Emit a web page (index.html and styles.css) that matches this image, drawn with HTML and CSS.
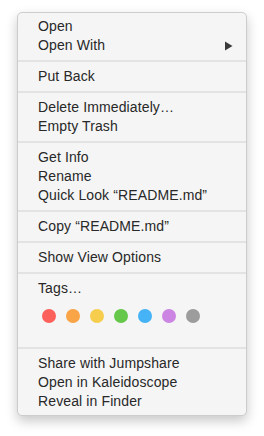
FILE: index.html
```html
<!DOCTYPE html>
<html>
<head>
<meta charset="utf-8">
<link rel="stylesheet" href="styles.css">
</head>
<body>
<div class="menu">
  <div class="item">Open</div>
  <div class="item has-sub">Open With
    <svg class="arrow" width="8" height="10" viewBox="0 0 8 10"><path d="M0 0.5 L7.5 5 L0 9.5 Z" fill="#3a3a3a"/></svg>
  </div>
  <div class="sep"></div>
  <div class="item">Put Back</div>
  <div class="sep"></div>
  <div class="item">Delete Immediately…</div>
  <div class="item">Empty Trash</div>
  <div class="sep"></div>
  <div class="item">Get Info</div>
  <div class="item">Rename</div>
  <div class="item">Quick Look “README.md”</div>
  <div class="sep"></div>
  <div class="item">Copy “README.md”</div>
  <div class="sep"></div>
  <div class="item">Show View Options</div>
  <div class="sep"></div>
  <div class="item">Tags…</div>
  <div class="tags">
    <span class="dot red"></span>
    <span class="dot orange"></span>
    <span class="dot yellow"></span>
    <span class="dot green"></span>
    <span class="dot blue"></span>
    <span class="dot purple"></span>
    <span class="dot gray"></span>
  </div>
  <div class="sep"></div>
  <div class="item">Share with Jumpshare</div>
  <div class="item">Open in Kaleidoscope</div>
  <div class="item">Reveal in Finder</div>
</div>
</body>
</html>
```
FILE: styles.css
```css
html, body {
  margin: 0;
  padding: 0;
  background: #ffffff;
}
body {
  width: 264px;
  height: 436px;
  overflow: hidden;
}
.menu {
  box-sizing: border-box;
  width: 230px;
  margin: 12px 0 0 17px;
  padding: 4px 0 4px 0;
  background: #f5f5f5;
  border: 1px solid #cdcdcd;
  border-radius: 5px;
  box-shadow: 0 5px 12px rgba(0, 0, 0, 0.22);
  font-family: "Liberation Sans", Arial, sans-serif;
  font-size: 14px;
  letter-spacing: 0.12px;
  color: #282828;
}
.item {
  display: flex;
  align-items: center;
  justify-content: space-between;
  height: 19px;
  line-height: 19px;
  padding: 0 13px 0 20px;
  white-space: nowrap;
}
.arrow {
  display: block;
  margin-top: 1px;
}
.sep {
  height: 12px;
  display: flex;
  align-items: center;
}
.sep::before {
  content: "";
  display: block;
  width: 100%;
  height: 2px;
  background: #e3e3e3;
}
.tags {
  display: flex;
  gap: 10px;
  padding: 11px 0 0 24px;
  height: 44px;
  box-sizing: border-box;
}
.dot {
  width: 14px;
  height: 14px;
  border-radius: 50%;
  flex: none;
}
.red { background: #fc605b; }
.orange { background: #f9a446; }
.yellow { background: #f6cd4d; }
.green { background: #65c84b; }
.blue { background: #45b3f5; }
.purple { background: #cc85e2; }
.gray { background: #9c9c9c; }
```
